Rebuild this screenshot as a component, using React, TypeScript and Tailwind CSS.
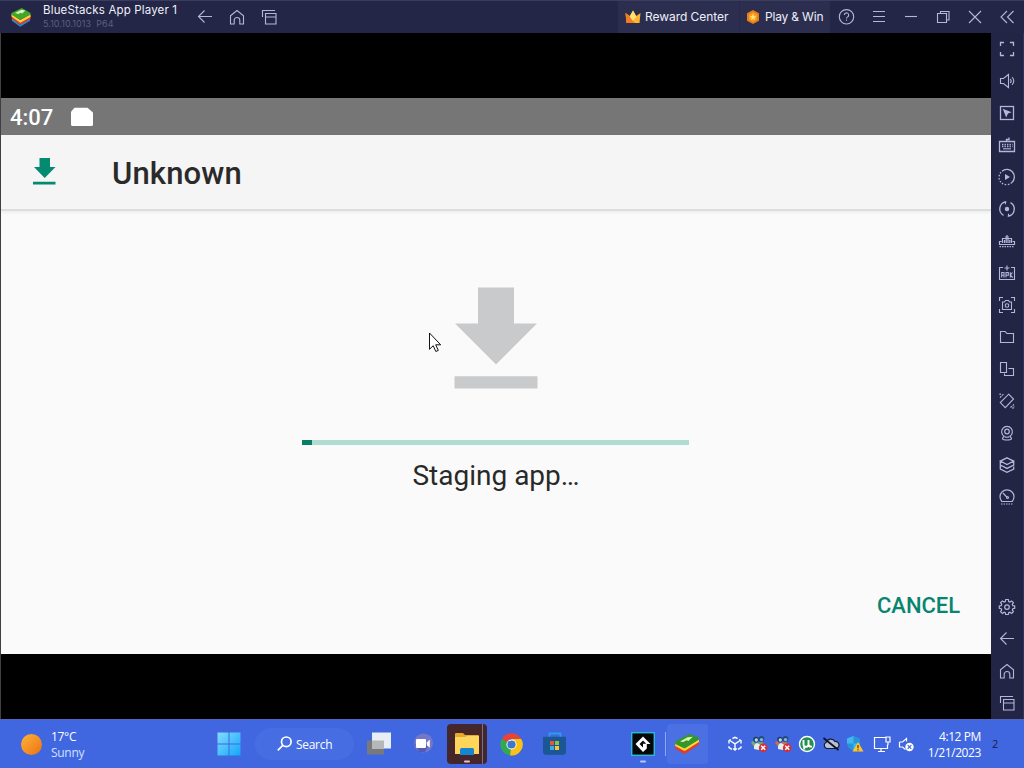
import type { ReactNode } from "react";

function Icon({ children, className = "" }: { children: ReactNode; className?: string }) {
  return (
    <svg
      viewBox="0 0 20 20"
      className={`size-5 shrink-0 fill-none stroke-[#b3b7dc] ${className}`}
      strokeWidth="1.1"
    >
      {children}
    </svg>
  );
}

function Cell({ children }: { children: ReactNode }) {
  return <div className="flex h-8 w-8 shrink-0 items-center justify-center">{children}</div>;
}

const BackIcon = () => (
  <Icon>
    <path d="M17 9.500H3.500M9.500 3.500l-6 6 6 6" />
  </Icon>
);
const HomeIcon = () => (
  <Icon>
    <path d="M3.500 8.800 10 3.500l6.500 5.300v8.200h-3.700v-3.700a2.800 2.800 0 0 0-5.600 0v3.700H3.500z" />
  </Icon>
);
const RecentsIcon = () => (
  <Icon>
    <path d="M3.500 10V3.500h12.500M6.500 6.500h10.500v10.500h-10.500zM6.500 10h10.500" />
  </Icon>
);

const tools: ReactNode[] = [
  <path d="M3.500 7V3.500H7M13 3.500h3.500V7M16.500 13v3.500H13M7 16.500H3.500V13" strokeWidth="1.3" />,
  <path d="M3.500 7.500h3l5-4v13l-5-4h-3zM13.300 8a3 3 0 0 1 0 4M15 6.200a5 5 0 0 1 0 7.600" />,
  <>
    <rect x="3.500" y="3.500" width="13" height="13" strokeWidth="1.3" />
    <path d="m5.700 5.800 9 3.400-3.700 1.400-1.800 3.800z" fill="#b3b7dc" stroke="none" />
  </>,
  <>
    <path d="M2.500 6.500h15v10h-15zM9.500 6.500V4.500H12V2.500" strokeWidth="1.3" />
    <path d="M5 9.500h10.500M5 11.500h10.500" strokeDasharray="1.400 1.100" strokeWidth="1.3" />
    <path d="M6 13.800h8" />
  </>,
  <>
    <path d="M5 4.200a7.300 7.300 0 0 1 9.800 11.300" strokeWidth="1.3" />
    <path d="M14.800 15.500A7.300 7.300 0 0 1 4.200 5" strokeDasharray="1.500 1.500" strokeWidth="1.3" />
    <path d="m8 7 5 3-5 3z" fill="#b3b7dc" stroke="none" />
  </>,
  <>
    <path d="M8.500 2.900A7.300 7.300 0 0 0 6.500 16.400M11.500 17.100A7.300 7.300 0 0 0 13.500 3.600" strokeWidth="1.3" />
    <path d="M6.200 3.700l2.500-.8-.3 2.400M13.800 16.300l-2.500.8.300-2.400" />
    <circle cx="10" cy="10" r="2.200" fill="#b3b7dc" stroke="none" />
  </>,
  <>
    <path d="M4.500 10.500h-2v3h15v-3h-2M5.500 12V7.500h9V12M7.500 12V9M9.200 12V7M11 12V7M12.800 12V9M10 7V4M8 6h4" strokeWidth="1.2" />
    <path d="M2.500 15.700h15" strokeDasharray="1.500 1" strokeWidth="1.3" />
  </>,
  <>
    <path d="M6 4.500H2.500v12h15v-12H14M10 2.500v5M7.500 5h5" />
    <path d="M4.700 14.500v-5H7v5M4.700 12.300H7M9 14.500v-5h2.300v2.800H9M13.300 9.300v5.200M15.500 9.500l-2.200 2.600 2.400 2.400" />
  </>,
  <>
    <path d="M2.500 6V2.500H6M14 2.500h3.500V6M17.500 14v3.500H14M6 17.500H2.500V14" />
    <path d="M5.500 7h2L8.500 5.500h3l1 1.500h2v7.500h-9z" />
    <circle cx="10" cy="10.500" r="1.800" />
  </>,
  <path d="M3.500 4.500h4.700l1.700 2h6.600v9h-13z" />,
  <path d="M3.500 3.500h6v10h-6zM11.500 9.500h5v7h-9v-2" />,
  <>
    <path d="m11.700 3.200 4.800 4.800-8.200 8.600-5-5z" />
    <path d="M3 6.500 6.500 3M3 4V3h1M13.500 16.500l3.500-3M15 17h2v-1.500" strokeDasharray="2 .8" />
  </>,
  <>
    <path d="M7.500 13.500a5.400 5.400 0 1 1 5 0M7 13.200 5.500 15.500q0 1.500 4.500 1.500t4.500-1.500L13 13.200" strokeWidth="1.2" />
    <circle cx="10" cy="8.500" r="2.300" strokeWidth="1.2" />
    <path d="M7.500 13.500q2.500 1.500 5 0" />
  </>,
  <path d="m10 2.800 6.700 3.300L10 9.500 3.300 6.100zM3.300 6.100v8L10 17.400l6.700-3.300v-2.500M16.700 6.100V10L10 13.400 3.300 10" strokeWidth="1.3" />,
  <>
    <path d="M4.800 14.500a7 7 0 1 1 10.400 0zM6 6l4.200 4.500" strokeWidth="1.2" />
    <circle cx="10.500" cy="10.500" r="1" />
    <path d="M4 17h12" strokeDasharray="1.500 1" />
  </>,
];

function SettingsIcon() {
  return (
    <Icon>
      <path
        d="M8.700 2.500h2.600l.4 2 1.200.5 1.700-1.100 1.800 1.800-1.100 1.700.5 1.200 1.900.3v2.400l-1.900.4-.5 1.200 1.100 1.700-1.800 1.800-1.700-1.100-1.200.5-.4 1.700H8.700l-.4-1.700-1.200-.5-1.700 1.100-1.800-1.800 1.100-1.700-.5-1.200-1.900-.4V8.900l1.900-.3.500-1.200-1.100-1.700 1.800-1.800L7.100 5l1.200-.5z"
        strokeWidth="1.2"
      />
      <circle cx="10" cy="10.100" r="2.300" strokeWidth="1.2" />
    </Icon>
  );
}

function BlueStacksLogo({ className }: { className: string }) {
  return (
    <svg viewBox="0 0 24 22" className={className}>
      <path d="m2 12 9 7.500 11-7v2.700L11 21.700 2 15z" fill="#258bd6" />
      <path d="m1.800 9.500 9.400 7.200L22.500 10v3.200L11.200 19.500 1.800 13z" fill="#e83a2c" />
      <path d="m1.500 7.500 9.600 6.800L22.500 8v3l-11.300 6.200L1.500 10.500z" fill="#ffd33b" />
      <path d="M1.500 6.500 12.800 1 22.500 6.500v1.800l-11.300 6L1.500 8.500z" fill="#43a62b" />
      <path d="m5.500 6.500 7-3.400 4.300.8-3.500 3.300-1.800-.8-2.500 1.300z" fill="#d8f5b9" />
    </svg>
  );
}

function BlueStacksTaskIcon() {
  return (
    <svg viewBox="0 0 26 22" className="h-[22px] w-[26px]">
      <path d="m1.500 12 9 5.500L25 8v3.500L11.500 20.500q-1 .6-2 0L1.500 16z" fill="#e23b27" />
      <path d="m1.200 10 8.800 5L25 6.500V9l-13.500 8.500q-1 .6-2 0L1.200 13z" fill="#ffd637" />
      <path d="M1.200 9.500q0-1 1-1.500L14 1.400q1.500-.7 3 0l7 2.600q1.500.8 1 2.500L11.500 15q-1 .6-2 0L1.200 11z" fill="#37962a" />
      <path d="m6 8.500 7.500-4.300 5.300-.4-4.400 4.300-2-.8-3 1.700z" fill="#d5f5ba" />
    </svg>
  );
}

function TitleBar() {
  return (
    <header className="flex h-[33px] shrink-0 border-t border-[#3b3d60] bg-[#232646] font-['Inter',sans-serif]">
      <div className="flex w-[189px] items-center pl-[10px]">
        <BlueStacksLogo className="h-5 w-[22px] shrink-0" />
        <div className="flex flex-col pl-[11px] whitespace-nowrap">
          <span className="text-[11.5px] leading-[14px] tracking-[0.16px] text-[#f0f0fa]">BlueStacks App Player 1</span>
          <span className="text-[9px] leading-[14px] tracking-[0.05px] text-[#5c5f80]">5.10.10.1013&nbsp; P64</span>
        </div>
      </div>
      <Cell><BackIcon /></Cell>
      <Cell><HomeIcon /></Cell>
      <Cell><RecentsIcon /></Cell>
      <div className="grow" />
      <div className="flex h-8 w-[121px] shrink-0 items-center bg-[#2c2e50] pl-[7px]">
        <svg viewBox="0 0 16 16" className="size-4 shrink-0">
          <path d="m0.500 4 4.200 3L8 1.500 11.300 7l4.200-3-1 10H1.500z" fill="#ffb52c" />
          <path d="m0.500 4 4 3 5.500 7H1.500z" fill="#f47b20" />
          <path d="m8 1.500 3.300 6.300L8 12 4.700 7.800z" fill="#ffe27b" />
        </svg>
        <span className="pl-[4px] text-[12px] tracking-[-0.05px] whitespace-nowrap text-[#eeeef8]">Reward Center</span>
      </div>
      <div className="flex h-8 w-[91px] shrink-0 items-center border-l border-[#272949] bg-[#2c2e50] pl-[6px]">
        <svg viewBox="0 0 14 14" className="size-[14px] shrink-0">
          <path d="m7 0 6 3.200v7.600L7 14l-6-3.200V3.200z" fill="#e87d16" />
          <path d="m7 2 4.200 2.500v5L7 12 2.800 9.500v-5z" fill="#fc9b28" />
          <path d="m7 3.800 1 2.100 2.300.3-1.700 1.500.5 2.400L7 8.900l-2.100 1.200.5-2.400-1.700-1.500L6 5.900z" fill="#ffe56e" />
        </svg>
        <span className="pl-[5px] text-[12px] tracking-[-0.18px] whitespace-nowrap text-[#eeeef8]">Play &amp; Win</span>
      </div>
      <Cell>
        <Icon>
          <circle cx="10.500" cy="9.800" r="7.200" />
          <path d="M8.300 8.100A2.200 2.200 0 1 1 11.700 9.900c-.8.500-1.200.8-1.200 1.600M10.500 12.500v1.300" />
        </Icon>
      </Cell>
      <Cell><Icon><path d="M5 4.500h12M5 9.500h12M5 14.500h12" /></Icon></Cell>
      <Cell><Icon><path d="M5 9.500h12" /></Icon></Cell>
      <Cell><Icon><path d="M5.500 6.500h9v9h-9zM8.500 6.500v-2h8.500v8.500h-2.500" /></Icon></Cell>
      <Cell><Icon><path d="m5 4 12 12M17 4 5 16" /></Icon></Cell>
      <Cell><Icon><path d="m11 4-6 6 6 6M17.500 4l-6 6 6 6" /></Icon></Cell>
      <div className="w-[2px] shrink-0" />
    </header>
  );
}

function Sidebar() {
  return (
    <aside className="flex w-[33px] shrink-0 flex-col border-r border-[#30335b] bg-[#222544]">
      {tools.map((t, i) => (
        <Cell key={i}><Icon>{t}</Icon></Cell>
      ))}
      <div className="grow" />
      <Cell><SettingsIcon /></Cell>
      <Cell><BackIcon /></Cell>
      <Cell><HomeIcon /></Cell>
      <Cell><RecentsIcon /></Cell>
    </aside>
  );
}

function Installer() {
  return (
    <main className="flex w-[991px] shrink-0 flex-col border-l border-[#3f3f45] bg-black py-[65px] font-['Roboto',sans-serif]">
      <div className="flex h-[37px] shrink-0 items-center bg-[#767676] pl-[9px]">
        <span className="w-[60px] pt-[3px] text-[22px] font-medium leading-none text-white">4:07</span>
        <svg viewBox="0 0 24 20" className="mt-px h-5 w-6">
          <path d="M2 3.500 4.500 .8H17.500l4 3.500q1.500.7 1.500 2V17.500q0 1.500-1.500 1.500h-19Q1 19 1 17.500V5z" fill="#fff" />
        </svg>
      </div>
      <div className="z-10 flex h-[76px] shrink-0 items-center border-b-2 border-[#dcdddf] bg-[#f5f5f5] pl-[32px] shadow-[0_1px_4px_rgba(0,0,0,0.08)]">
        <svg viewBox="0 0 24 28" className="h-7 w-6 fill-[#048a70]">
          <path d="M6.500 0h10.500v9h5.500L11.700 20 1 9h5.500zM0 23.800h22.500v2.700H0z" />
        </svg>
        <h1 className="pt-[2px] pl-[55px] text-[31px] font-medium leading-none tracking-[0.15px] text-[#2a2a2a]">Unknown</h1>
      </div>
      <div className="flex grow flex-col items-center bg-[#fafafa] pt-[76px]">
        <svg viewBox="0 0 84 102" className="h-[102px] w-[84px] fill-[#c8cacc]">
          <path d="M24 .6h36v36h23L42 77.500 1 36.600h23zM.5 89.300h83v12.200H.5z" />
        </svg>
        <div className="mt-[51px] mr-[2px] flex h-[5px] w-[387px] bg-[#b1dcd2]">
          <div className="w-[10px] bg-[#087e65]" />
        </div>
        <p className="mt-[15px] text-[28px] leading-[32px] text-[#292929]">Staging app…</p>
        <button className="mt-auto mr-[31px] mb-[36px] self-end text-[22px] font-medium leading-[25px] tracking-[-0.05px] text-[#088570]">CANCEL</button>
      </div>
      <svg viewBox="0 0 14 21" className="absolute top-[332px] left-[429px] z-20 h-[21px] w-[14px]">
        <path d="M.5 1v16.300l3.700-3.600 2.600 5.800 2.500-1.100-2.600-5.600h5z" fill="#fff" stroke="#111" />
      </svg>
    </main>
  );
}

function Weather() {
  return (
    <div className="flex w-[204px] shrink-0 items-center gap-[9px] pl-[21px]">
      <div className="size-[21px] rounded-full bg-linear-to-br from-[#ffb13a] to-[#e9730c]" />
      <div className="pt-[2px] text-[12px] leading-[16px] tracking-[-0.3px]">
        <div className="text-white">17°C</div>
        <div className="text-[#d3e0ff]">Sunny</div>
      </div>
    </div>
  );
}

function Tray({ children, className = "" }: { children: ReactNode; className?: string }) {
  return (
    <div className={`flex h-full w-6 shrink-0 items-center justify-center ${className}`}>
      <svg viewBox="0 0 18 18" className="size-[18px] overflow-visible fill-none stroke-white" strokeWidth="1.2">
        {children}
      </svg>
    </div>
  );
}

function Peers({ tint }: { tint: string }) {
  return (
    <>
      <g stroke="none">
        <circle cx="6" cy="4.500" r="2.800" fill="#213a67" />
        <circle cx="11.500" cy="3.800" r="2.800" fill="#244b7c" />
        <circle cx="6.300" cy="5" r="1.700" fill="#b5dce0" />
        <circle cx="11.500" cy="4.600" r="1.600" fill="#83bdd3" />
        <path d="M1 7.500 3 6l2.500 2.500L9 7l4 .5 2 6.500H5L3.500 11z" fill={tint} />
        <path d="M4 14q-.5-5 3-6l3.500 2L9 15z" fill="#e5f0e9" />
        <circle cx="13.200" cy="12.800" r="4.300" fill="#d92d32" />
      </g>
      <path d="m11.200 10.800 4 4m0-4-4 4" strokeWidth="1.500" />
    </>
  );
}

function Taskbar() {
  return (
    <footer className="flex h-[49px] shrink-0 items-center border-t border-[#5365bd] bg-[#4067df] font-['Open_Sans','Noto_Sans',sans-serif]">
      <Weather />
      <div className="ml-px flex w-12 shrink-0 justify-center">
        <svg viewBox="0 0 24 24" className="size-6">
          <defs>
            <linearGradient id="win" x1="0" y1="0" x2="1" y2="1">
              <stop stopColor="#83dcff" />
              <stop offset="1" stopColor="#13a5fa" />
            </linearGradient>
          </defs>
          <path d="M.5 .5h11v11H.5zM12.500 .5h11v11h-11zM.5 12.500h11v11H.5zM12.500 12.500h11v11h-11z" fill="url(#win)" />
        </svg>
      </div>
      <div className="ml-[2px] flex h-8 w-[99px] shrink-0 items-center rounded-2xl bg-[#466de2] pl-[20px]">
        <svg viewBox="0 0 18 18" className="size-[18px] fill-none stroke-white" strokeWidth="1.700">
          <circle cx="11.300" cy="6.800" r="4.800" />
          <path d="m7.800 10.300-5 5" />
        </svg>
        <span className="pt-[2px] pl-[3px] text-[12px] tracking-[-0.3px] text-white">Search</span>
      </div>
      <div className="ml-[3px] flex w-11 shrink-0 justify-center">
        <svg viewBox="0 0 26 24" className="h-6 w-[26px]">
          <path d="M1 8.500h17v14H1z" fill="#77797d" />
          <path d="M6 .5h19v16H6z" fill="#e7eef6" />
          <path d="M6 8.500h12v8H6z" fill="#b6b7b9" />
        </svg>
      </div>
      <div className="flex w-11 shrink-0 justify-center">
        <svg viewBox="0 0 24 24" className="size-6">
          <circle cx="12.500" cy="11" r="9.500" fill="#7477c8" />
          <path d="M4 12h14l-4 8H8z" fill="#5559b8" />
          <rect x="5" y="7" width="10" height="9" rx="1" fill="#fff" />
          <path d="m15.800 10.500 3-3v8l-3-2z" fill="#fff" />
        </svg>
      </div>
      <div className="flex w-11 shrink-0 justify-center">
        <svg viewBox="0 0 40 40" className="size-10">
          <rect width="40" height="40" rx="4" fill="#45262b" />
          <path d="M8 10q0-1 1-1h7l2 2h13q1 0 1 1v18H8z" fill="#e8a82d" />
          <path d="M8 13h10l2-1h12v18H8z" fill="#ffd65c" />
          <path d="M13 31v-5.500q0-1.500 1.500-1.500h11q1.500 0 1.500 1.500V31z" fill="#1585cd" />
          <path d="M35.500 0v40" stroke="#777087" />
          <rect x="17" y="36.500" width="6" height="2" rx="1" fill="#f3bdc8" />
        </svg>
      </div>
      <div className="flex w-11 shrink-0 justify-center">
        <svg viewBox="0 0 24 24" className="size-[23px]">
          <path d="M12 12 2 6a11.500 11.500 0 0 0 8.500 17.400L17 15z" fill="#31a852" />
          <path d="m12 12-1.500 11.400A11.500 11.500 0 0 0 22 6H12z" fill="#fbc116" />
          <path d="M2 6A11.500 11.500 0 0 1 22 6H12z" fill="#e94335" />
          <path d="M12 12 2 6l5-1 5 2z" fill="#e94335" />
          <circle cx="12" cy="12" r="5.300" fill="#fff" />
          <circle cx="12" cy="12" r="4.300" fill="#3d77cc" />
        </svg>
      </div>
      <div className="flex w-11 shrink-0 justify-center">
        <svg viewBox="0 0 24 24" className="size-6">
          <path d="M6.500 6V1.500h11V6" fill="none" stroke="#2b9ee8" strokeWidth="1.800" />
          <path d="M0 4.800h23v15q0 3-3 3H3q-3 0-3-3z" fill="#1a5794" />
          <path d="M7 9h4v4H7z" fill="#f05331" />
          <path d="M12 9h4v4h-4z" fill="#8bc53f" />
          <path d="M7 14h4v4H7z" fill="#34adea" />
          <path d="M12 14h4v4h-4z" fill="#ffc42e" />
        </svg>
      </div>
      <div className="ml-[44px] flex w-11 shrink-0 justify-center">
        <svg viewBox="0 0 24 32" className="h-8 w-6 translate-y-[4px]">
          <rect x=".75" y=".75" width="22.500" height="22.500" fill="#050708" stroke="#28c8df" strokeWidth="1.300" />
          <path d="m12 4.500 7.500 7.500h-4L12 8.500 8.500 12l3.500 3.500v-3.700h3.800v4.700L12 20l-7.500-8z" fill="#fff" />
          <rect x="9" y="28.500" width="6" height="2" rx="1" fill="#b8c7f5" />
        </svg>
      </div>
      <div className="h-6 w-px shrink-0 bg-[#91a8ee]" />
      <div className="ml-px flex h-10 w-[41px] shrink-0 items-center justify-center rounded bg-[#4a70e4] pr-[2px] pb-px">
        <BlueStacksTaskIcon />
      </div>
      <div className="grow" />
      <Tray>
        <path d="M6.500 3.500 9 2.300l2.500 1.200M3 8.500V5.700l2-1M15 8.500V5.700l-2-1M3 11.200v1.300l3 1.800M15 11.200v1.300l-3 1.800M9 8.800V15M9 8.800 4.500 6M9 8.800 13.500 6M7.200 13.500 9 15l1.800-1.500" strokeWidth="1.400" />
      </Tray>
      <Tray><Peers tint="#77ac70" /></Tray>
      <Tray><Peers tint="#d06f4d" /></Tray>
      <Tray>
        <circle cx="9" cy="9" r="7.500" fill="#238f50" strokeWidth="1.400" />
        <path d="M5.500 5v4.500q0 2.500 2.700 2.300 2.300-.3 2.300-2.300V5M10.500 9.500q.5 2.500 3.500 2M6.200 10.500v4" strokeWidth="1.900" />
      </Tray>
      <Tray>
        <path d="M5 13.500a3.200 3.200 0 0 1-1-6 5 5 0 0 1 9-1 3.500 3.500 0 0 1 1 7z" fill="#b9c0d4" stroke="#14192e" />
        <path d="m1.500 3 15 12" stroke="#0d1124" strokeWidth="1.700" />
      </Tray>
      <Tray>
        <path d="M7.500 1 14 3.500V8q0 5-6.500 8Q1 13 1 8V3.500z" fill="#2596dc" stroke="none" />
        <path d="M7.500 1v7.500H1v-5zM7.500 8.500H14q-.5 4.500-6.500 7.500z" fill="#43b7ed" stroke="none" />
        <path d="m12 7 5.500 9.500h-11z" fill="#ffc52d" stroke="none" />
        <path d="M12 10v3.200M12 14.200v1.300" stroke="#493914" />
      </Tray>
      <Tray className="ml-[3px]">
        <path d="M12.500 2.500h-11v11h13v-4M8 13.500v3M5 16.500h7M13 2h4v5h-4zM15 7v3" />
      </Tray>
      <Tray className="ml-px">
        <path d="M1.500 7h3l4-3.500v3M1.500 7v5h3l3 2.500" />
        <circle cx="11.500" cy="12" r="4.200" fill="#fff" stroke="none" />
        <path d="m9.700 10.200 3.600 3.600m0-3.600-3.600 3.600" stroke="#4067df" />
      </Tray>
      <div className="w-[62px] shrink-0 pt-px text-right text-[12px] leading-4 tracking-[-0.4px] whitespace-nowrap text-white">
        <div>4:12 PM</div>
        <div>1/21/2023</div>
      </div>
      <div className="w-[43px] shrink-0 pl-[11px] text-[11px] text-[#14224f]">2</div>
    </footer>
  );
}

export default function App() {
  return (
    <div className="relative flex h-[768px] w-[1024px] flex-col overflow-hidden bg-black">
      <TitleBar />
      <div className="flex h-[686px] shrink-0">
        <Installer />
        <Sidebar />
      </div>
      <Taskbar />
    </div>
  );
}
